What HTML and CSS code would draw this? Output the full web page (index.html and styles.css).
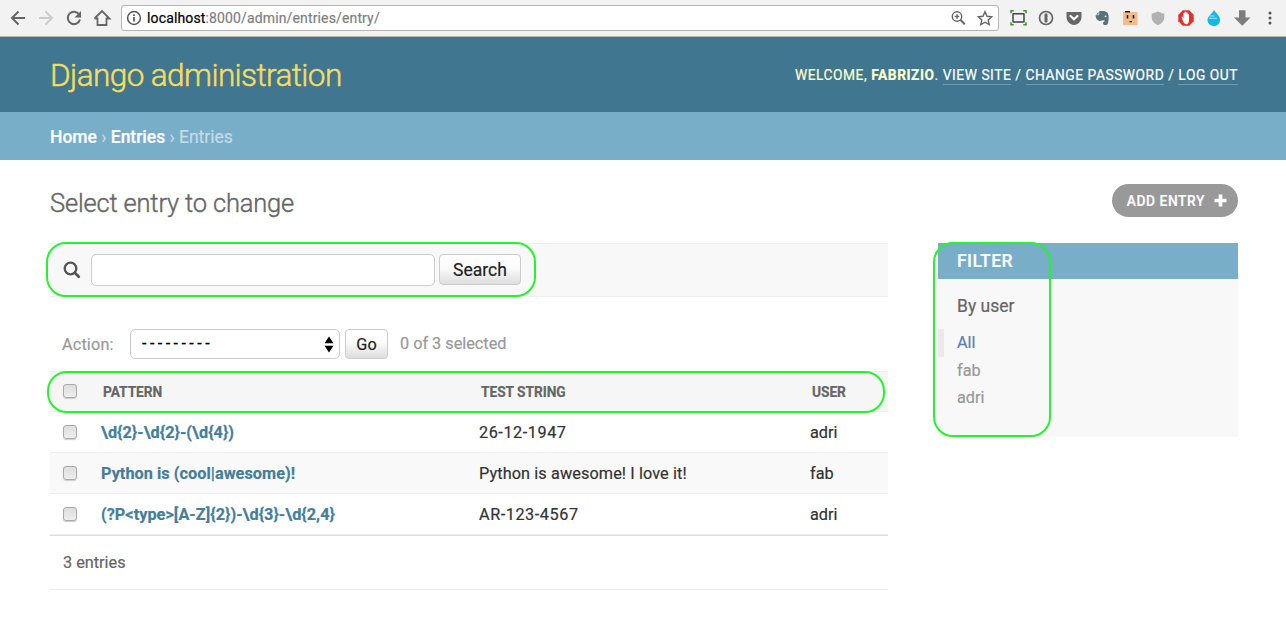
FILE: index.html
```html
<!DOCTYPE html>
<html lang="en">
<head>
<meta charset="utf-8">
<title>Select entry to change | Django site admin</title>
<link rel="stylesheet" href="styles.css">
</head>
<body>
<div class="toolbar">
  <svg class="nav" width="112" height="36" viewBox="0 0 112 36" fill="none" stroke="#666" stroke-width="2">
    <path d="M25 18H12.5M18.5 11.5L12 18l6.500 6.500"/>
    <path stroke="#ccc" d="M39 18h12.500M45.500 11.500L52 18l-6.500 6.500"/>
    <path d="M79.200 14.500A6.200 6.200 0 1 0 80 19.500"/><path fill="#666" stroke="none" d="M81 11v6.500h-6.500z"/>
    <path d="M97.500 17.500V25h9v-7.500M94.500 18.500L102 11l7.500 7.500H106.500M94.500 18.500H97.500" stroke-width="1.800"/>
  </svg>
  <div class="address">
    <svg width="16" height="16" viewBox="0 0 16 16" fill="none" stroke="#555" stroke-width="1.500"><circle cx="8" cy="8" r="6.400"/><path d="M8 7v4.500M8 4.200v1.700" stroke-width="1.700"/></svg>
    <span class="url"><b>localhost</b>:8000/admin/entries/entry/</span>
    <svg width="46" height="18" viewBox="0 0 46 18" fill="none" stroke="#666" stroke-width="1.400"><circle cx="7" cy="7.500" r="4.700"/><path d="M4.800 7.500h4.400M7 5.300v4.400"/><path d="M10.500 11l4.300 4.300" stroke-width="2"/><path d="M35 2.800l2 4.500 4.700.5-3.500 3.200 1 4.700-4.200-2.500-4.200 2.500 1-4.700-3.500-3.200 4.700-.5z"/></svg>
  </div>
  <svg class="extensions" width="282" height="36" viewBox="0 0 282 36">
    <g fill="none" stroke="#35962b" stroke-width="1.500"><path d="M7 13.300v-2.500h2.700M19.300 10.800H22v2.500M22 22.200v2.500h-2.700M9.700 24.700H7v-2.500"/></g>
    <rect x="9" y="13.700" width="11" height="8.300" rx=".6" fill="#f2f2f2" stroke="#444" stroke-width="1.500"/>
    <circle cx="42" cy="18" r="6.500" fill="#eee" stroke="#666" stroke-width="1.700"/><rect x="40.500" y="13.500" width="3" height="9" rx="1" fill="#666"/>
    <path d="M62.500 12h15v5c0 4-3.500 8-7.500 8s-7.500-4-7.500-8z" fill="#666"/><path d="M66.500 16l3.500 3.300 3.500-3.300" fill="none" stroke="#fff" stroke-width="2.200" stroke-linecap="round"/>
    <path d="M91.500 15.500l3.500-4 1.500-.5h3.500l3.500 1.500c1.500 3 1.500 7 .5 10.500-.5 2-2 2.300-4 2-1.500-1-1.300-3 .5-3.500v-1.300l-2.300.3-2.700.5c-2.500-.5-3.500-2.500-4-5.500z" fill="#59727a"/><circle cx="101.500" cy="16.300" r=".9" fill="#f2f2f2"/><path d="M91.800 14.700h3v-3" stroke="#f2f2f2" stroke-width=".7" fill="none"/>
    <path d="M119 12h14.500v13H119z" fill="#f4bd87"/><path d="M121 11h5v1.500h-5z" fill="#14183b"/><path d="M122.700 15h1.600v3.500h-1.600zM128.700 15h1.600v3.500h-1.600zM125.500 21h2.500v1.300h-2.500z" fill="#18151c"/>
    <path d="M154 11.500l6.300 2.300v3.700c0 3.500-2.500 6-6.300 7.500-3.800-1.500-6.300-4-6.300-7.500v-3.700z" fill="#b2b2b2"/>
    <path d="M178.800 10.300h6.400l4.500 4.500v6.400l-4.500 4.500h-6.400l-4.500-4.500v-6.400z" fill="#e62e2b"/><path d="M179 21l-1.500-4 1-.5 1 1.500v-5l1.100-.2.2-1 1.200-.2.4.8 1.200.2.300 1.300 1.100.3v5.300c0 3-1 4.800-2.500 4.800-1.700 0-2.500-1-3.500-3.300z" fill="#fff"/>
    <path d="M210 10c1.500 3 6 5.500 6 10 0 3.700-2.700 6-6 6s-6.500-2.300-6.500-6c0-4 5-6.500 6.500-10z" fill="#17b5e9"/><path d="M205.500 16h5M205 18.300h8" stroke="#9beaff" stroke-width="1"/>
    <path d="M235 10.200h6.500v7.300h5l-8.250 8.300-8.250-8.300h5z" fill="#7d7d7d"/>
    <g fill="#555"><circle cx="266" cy="13" r="1.500"/><circle cx="266" cy="18" r="1.500"/><circle cx="266" cy="23" r="1.500"/></g>
  </svg>
</div>

<header class="header">
  <h1 class="brand">Django administration</h1>
  <div class="user-tools">Welcome, <strong>Fabrizio</strong>. <a>View site</a> / <a>Change password</a> / <a>Log out</a></div>
</header>
<nav class="breadcrumbs"><b>Home</b> › <b>Entries</b> › Entries</nav>

<main class="content">
  <div class="title-row">
    <h2 class="title">Select entry to change</h2>
    <a class="add"><span>Add entry</span><svg width="13" height="13" viewBox="0 0 13 13"><path d="M6.500 .5v12M.5 6.500h12" stroke="#fff" stroke-width="3.600"/></svg></a>
  </div>
  <div class="columns">
    <section class="changelist">
      <div class="search">
        <svg width="18" height="18" viewBox="0 0 18 18" fill="none" stroke="#555"><circle cx="7.500" cy="7.500" r="5.800" stroke-width="2.300"/><path d="M11.800 11.800l4 4" stroke-width="2.700" stroke-linecap="round"/></svg>
        <input class="query" type="text" aria-label="Search"><button class="button search-button">Search</button>
        <div class="mark mark-search"></div>
      </div>
      <div class="actions">
        <span class="action-label">Action:</span>
        <div class="select"><span class="dashes">---------</span><svg width="10" height="17" viewBox="0 0 10 17"><path d="M5 .500l4.500 6.700h-9zM5 16.500l4.500-6.700h-9z"/></svg></div>
        <button class="button go">Go</button>
        <span class="count">0 of 3 selected</span>
      </div>
      <div class="table">
        <div class="row head"><i class="check"></i><span>Pattern</span><span>Test string</span><span>User</span><div class="mark mark-head"></div></div>
        <div class="row"><i class="check"></i><b>\d{2}-\d{2}-(\d{4})</b><span class="digits">26-12-1947</span><span>adri</span></div>
        <div class="row alt"><i class="check"></i><b>Python is (cool|awesome)!</b><span class="sentence">Python is awesome! I love it!</span><span>fab</span></div>
        <div class="row"><i class="check"></i><b>(?P&lt;type&gt;[A-Z]{2})-\d{3}-\d{2,4}</b><span class="digits">AR-123-4567</span><span>adri</span></div>
      </div>
      <div class="paginator">3 entries</div>
    </section>
    <aside class="filter">
      <h3 class="filter-title">Filter</h3>
      <h4 class="filter-by">By user</h4>
      <ul class="choices"><li class="selected">All</li><li>fab</li><li>adri</li></ul>
      <div class="mark mark-filter"></div>
    </aside>
  </div>
</main>
</body>
</html>
```
FILE: styles.css
```css
* { box-sizing: border-box; }
body { margin: 0; height: 617px; overflow: hidden; background: #fff; color: #333; font: 16.25px/20px Roboto, sans-serif; white-space: nowrap; -webkit-text-stroke: .2px; }
h1, h2, h3, h4, ul { margin: 0; padding: 0; font-weight: 400; }
svg { display: block; flex: none; }

.toolbar { height: 37px; display: flex; background: #f2f2f2; border-bottom: 1px solid #b3b3b3; }
.nav { margin-right: 9px; }
.address { width: 878px; height: 26px; margin: 5px 5px 0 0; padding: 0 2px 0 4px; display: flex; align-items: center; background: #fff; border: 1px solid #b5b5b5; border-radius: 3px; }
.url { flex: 1; margin-left: 5px; font: 14px/20px Roboto, sans-serif; letter-spacing: .14px; color: #808080; }
.url b { font-weight: 400; color: #000; }

.header { height: 75px; padding: 0 48px 0 50px; display: flex; align-items: center; justify-content: space-between; background: #417690; color: #ffc; }
.brand { padding-top: 2px; font-size: 31.5px; line-height: 40px; font-weight: 300; letter-spacing: -.58px; color: #f5dd5d; -webkit-text-stroke: .5px; }
.user-tools { font-size: 13.75px; letter-spacing: .55px; text-transform: uppercase; }
.user-tools a { padding-bottom: 1px; border-bottom: 1px solid #7298aa; color: #fff; }
.breadcrumbs { height: 48px; padding: 15px 50px; background: #79aec8; color: #c4dce8; font-size: 17.5px; letter-spacing: -.02px; }
.breadcrumbs b { font-weight: 500; color: #fff; }

.content { padding: 24px 48px 0 50px; }
.title-row { height: 59px; display: flex; justify-content: space-between; }
.title { padding-top: 1px; font-size: 25.5px; line-height: 36px; font-weight: 300; letter-spacing: -.18px; color: #666; -webkit-text-stroke: .4px; }
.add { height: 33px; padding: 0 11px 0 15px; display: flex; align-items: center; gap: 9px; border-radius: 17px; background: #999; color: #fff; font-size: 13.75px; font-weight: 500; letter-spacing: .6px; text-transform: uppercase; }
.columns { display: flex; align-items: flex-start; gap: 50px; }
.changelist { width: 838px; }

.search { position: relative; height: 54px; padding-left: 13px; display: flex; align-items: center; background: #f8f8f8; border: solid #eee; border-width: 1px 0; }
.query { width: 344px; height: 32px; margin: 0 4px 0 10px; border: 1px solid #ccc; border-radius: 5px; background: #fff; }
.button { padding: 0; border: 1px solid #ccc; border-radius: 4px; background: linear-gradient(#fff, #fbfbfb 45%, #ddd); color: #222; font: 17.5px/28px Roboto, sans-serif; -webkit-text-stroke: .2px; }
.search-button { width: 82px; height: 31px; margin-bottom: 1px; }
.actions { height: 74px; padding: 20px 0 0 12px; display: flex; align-items: center; color: #999; }
.action-label { width: 68px; padding-top: 1px; letter-spacing: .15px; }
.select { width: 210px; height: 30px; padding: 0 5px 0 11px; display: flex; align-items: center; justify-content: space-between; border: 1px solid #ccc; border-radius: 5px; background: #fff; color: #000; }
.dashes { letter-spacing: 3.4px; transform-origin: left; }
.go { width: 43px; height: 30px; margin: 0 12px 0 5px; padding-top: 1px; font-size: 16.25px; }

.row { height: 41px; padding: 1px 0 0 13px; display: grid; grid-template-columns: 38px 378px 331px 1fr; align-items: center; border-bottom: 1px solid #eee; }
.row > span, .row > b { padding-top: 1px; }
.row b { font-weight: 700; color: #447e9b; letter-spacing: .04px; }
.digits { letter-spacing: .55px; }
.sentence { letter-spacing: .1px; }
.alt { background: #f9f9f9; }
.row.head { position: relative; padding-top: 0; background: #f6f6f6; border-top: 1px solid #eee; font-size: 13.75px; font-weight: 700; color: #666; text-transform: uppercase; }
.head > span { padding-left: 2px; letter-spacing: -.05px; }
.check { width: 14px; height: 14px; border: 1px solid #aaa; border-radius: 3px; background: linear-gradient(#ddd, #eee); box-shadow: 0 1px 1px #ccc; }
.row .check { margin-bottom: 1px; }
.paginator { height: 55px; padding: 17px 13px; border-top: 1px solid #ddd; border-bottom: 1px solid #eee; color: #666; }

.filter { position: relative; width: 300px; height: 194px; background: #f8f8f8; }
.filter-title { height: 36px; padding-left: 19px; background: #79aec8; color: #fff; font-size: 17.5px; line-height: 36px; font-weight: 500; letter-spacing: .4px; text-transform: uppercase; }
.filter-by { padding: 17px 19px 13px; color: #666; font-size: 17.5px; }
.choices { list-style: none; color: #999; }
.choices li { height: 27.5px; padding-left: 19px; line-height: 28px; }
.choices .selected { padding-left: 13px; border-left: 6px solid #eaeaea; color: #5b80b2; }

/* Annotation outlines drawn over the page */
.mark { position: absolute; border: 2px solid #24f52b; border-radius: 20px; pointer-events: none; }
.mark-search { left: -4px; top: -2px; width: 490px; height: 55px; }
.mark-head { left: -3px; top: -1px; width: 838px; height: 42px; }
.mark-filter { left: -5px; top: -1px; width: 118px; height: 195px; }
```
